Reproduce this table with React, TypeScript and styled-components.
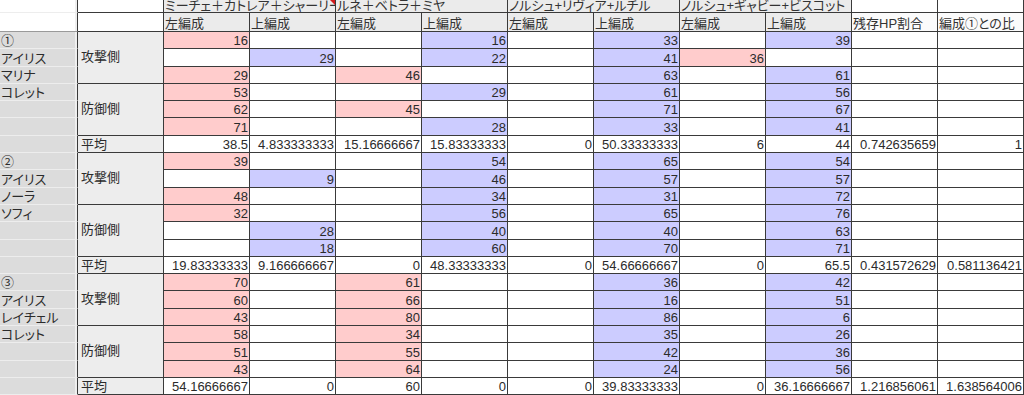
import React from 'react';
import styled, { createGlobalStyle, css } from 'styled-components';

type Fill = 'pink' | 'blue' | 'white';

const GlobalStyle = createGlobalStyle`
  html, body {
    margin: 0;
    padding: 0;
    background: #fff;
    overflow: hidden;
  }
`;

const LINE = '#3a3a3a';

const fills: Record<Fill, string> = {
  pink: '#ffcccc',
  blue: '#ccccff',
  white: '#ffffff',
};

// 'p' = pink (左編成), 'b' = lavender (上編成)
const groups = [
  {
    names: ['①', 'アイリス', 'マリナ', 'コレット'],
    rows: [
      ['p16', '', '', 'b16', '', 'b33', '', 'b39'],
      ['', 'b29', '', 'b22', '', 'b41', 'p36', ''],
      ['p29', '', 'p46', '', '', 'b63', '', 'b61'],
      ['p53', '', '', 'b29', '', 'b61', '', 'b56'],
      ['p62', '', 'p45', '', '', 'b71', '', 'b67'],
      ['p71', '', '', 'b28', '', 'b33', '', 'b41'],
    ],
    avg: ['38.5', '4.833333333', '15.16666667', '15.83333333', '0', '50.33333333', '6', '44', '0.742635659', '1'],
  },
  {
    names: ['②', 'アイリス', 'ノーラ', 'ソフィ'],
    rows: [
      ['p39', '', '', 'b54', '', 'b65', '', 'b54'],
      ['', 'b9', '', 'b46', '', 'b57', '', 'b57'],
      ['p48', '', '', 'b34', '', 'b31', '', 'b72'],
      ['p32', '', '', 'b56', '', 'b65', '', 'b76'],
      ['', 'b28', '', 'b40', '', 'b40', '', 'b63'],
      ['', 'b18', '', 'b60', '', 'b70', '', 'b71'],
    ],
    avg: ['19.83333333', '9.166666667', '0', '48.33333333', '0', '54.66666667', '0', '65.5', '0.431572629', '0.581136421'],
  },
  {
    names: ['③', 'アイリス', 'レイチェル', 'コレット'],
    rows: [
      ['p70', '', 'p61', '', '', 'b36', '', 'b42'],
      ['p60', '', 'p66', '', '', 'b16', '', 'b51'],
      ['p43', '', 'p80', '', '', 'b86', '', 'b6'],
      ['p58', '', 'p34', '', '', 'b35', '', 'b26'],
      ['p51', '', 'p55', '', '', 'b42', '', 'b36'],
      ['p43', '', 'p64', '', '', 'b24', '', 'b56'],
    ],
    avg: ['54.16666667', '0', '60', '0', '0', '39.83333333', '0', '36.16666667', '1.216856061', '1.638564006'],
  },
];

const teams = [
  { label: 'ミーチェ＋カトレア＋シャーリー', comment: true },
  { label: 'ルネ＋ベトラ＋ミヤ', comment: false },
  { label: 'ノルシュ+リヴィア+ルチル', comment: false },
  { label: 'ノルシュ+ギャビー+ビスコット', comment: false },
];

const parse = (raw: string): { text: string; fill: Fill } => {
  if (raw.startsWith('p')) return { text: raw.slice(1), fill: 'pink' };
  if (raw.startsWith('b')) return { text: raw.slice(1), fill: 'blue' };
  return { text: raw, fill: 'white' };
};

const App = () => (
  <>
    <GlobalStyle />
    <Sheet>
      <RowHead $top />
      <SideCell $top />
      {teams.map((t) => (
        <HeadCell key={t.label} $span={2} $comment={t.comment}>
          {t.label}
        </HeadCell>
      ))}
      <Cell $fill="white" />
      <Cell $fill="white" />

      <RowHead $top $lower />
      <SideCell $top />
      {teams.map((t) => (
        <React.Fragment key={t.label}>
          <HeadCell>左編成</HeadCell>
          <HeadCell>上編成</HeadCell>
        </React.Fragment>
      ))}
      <HeadCell $plain>残存HP割合</HeadCell>
      <HeadCell $plain>編成①との比</HeadCell>

      {groups.map((g, gi) => (
        <React.Fragment key={gi}>
          {g.rows.map((row, ri) => (
            <React.Fragment key={ri}>
              <RowHead>{g.names[ri] || ''}</RowHead>
              {ri === 0 && <SideCell $rows={3}>攻撃側</SideCell>}
              {ri === 3 && <SideCell $rows={3}>防御側</SideCell>}
              {row.map((raw, ci) => {
                const { text, fill } = parse(raw);
                return (
                  <Cell key={ci} $fill={fill}>
                    {text}
                  </Cell>
                );
              })}
              <Cell $fill="white" />
              <Cell $fill="white" />
            </React.Fragment>
          ))}
          <RowHead />
          <SideCell>平均</SideCell>
          {g.avg.map((v, ci) => (
            <Cell key={ci} $fill="white">
              {v}
            </Cell>
          ))}
        </React.Fragment>
      ))}
    </Sheet>
  </>
);

const Sheet = styled.div`
  display: grid;
  width: 1024px;
  grid-template-columns: 78px 86px repeat(10, 86px);
  grid-template-rows: 13px 19px repeat(21, 17.3px);
  font-family: 'Liberation Sans', 'Noto Sans CJK JP', sans-serif;
  font-size: 13px;
  line-height: 12px;
  color: #2b2b2b;
  background: #fff;
  overflow: hidden;
`;

const baseCell = css`
  box-sizing: border-box;
  display: flex;
  align-items: flex-end;
  min-width: 0;
  overflow: hidden;
  white-space: nowrap;
  font-feature-settings: 'palt';
`;

const RowHead = styled.div<{ $top?: boolean; $lower?: boolean }>`
  ${baseCell};
  padding: 0 0 1px 1px;
  background: ${({ $top }) => ($top ? '#ffffff' : '#dcdcdc')};
  border-bottom: 1px solid ${({ $lower }) => ($lower ? '#9a9a9a' : '#ededed')};
  border-right: 1px solid ${LINE};
  box-shadow: inset -2px 0 0 #efefef;
`;

const SideCell = styled.div<{ $rows?: number; $top?: boolean }>`
  ${baseCell};
  grid-row: span ${({ $rows }) => $rows || 1};
  align-items: ${({ $rows }) => ($rows ? 'center' : 'flex-end')};
  padding: 0 0 1px 3px;
  background: ${({ $top }) => ($top ? '#ffffff' : '#ededed')};
  border-right: 1px solid ${LINE};
  border-bottom: 1px solid ${LINE};
`;

const HeadCell = styled.div<{ $span?: number; $comment?: boolean; $plain?: boolean }>`
  ${baseCell};
  position: relative;
  grid-column: span ${({ $span }) => $span || 1};
  padding: 0 0 ${({ $span }) => ($span ? '0' : '1px')} 1px;
  overflow: clip;
  overflow-clip-margin: 0;
  color: #333;
  background: ${({ $plain }) => ($plain ? '#fbfbfb' : '#ebebeb')};
  border-right: 1px solid ${LINE};
  border-bottom: 1px solid ${LINE};

  ${({ $comment }) =>
    $comment &&
    css`
      &::after {
        content: '';
        position: absolute;
        top: 0;
        right: 0;
        border-style: solid;
        border-width: 0 5px 5px 0;
        border-color: transparent #d41a1a transparent transparent;
      }
    `}
`;

const Cell = styled.div<{ $fill: Fill }>`
  ${baseCell};
  justify-content: flex-end;
  padding: 0 1px 1px 0;
  background: ${({ $fill }) => fills[$fill]};
  border-right: 1px solid ${LINE};
  border-bottom: 1px solid ${LINE};
`;

export default App;
